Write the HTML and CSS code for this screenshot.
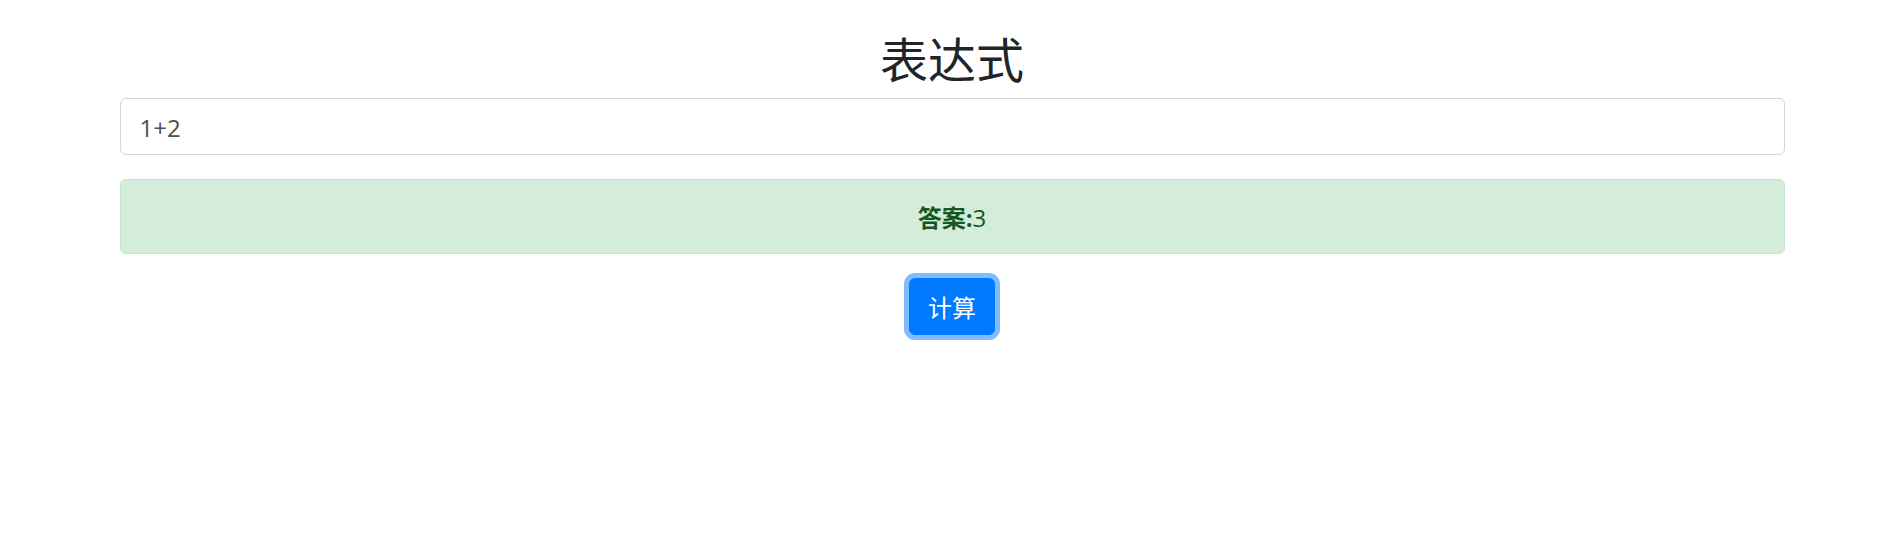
FILE: index.html
```html
<!DOCTYPE html>
<html lang="zh-CN">
<head>
<meta charset="utf-8">
<title>表达式</title>
<link rel="stylesheet" href="styles.css">
</head>
<body>
<main class="container">
  <form class="calculator">
    <h1 class="title"><label for="expression">表达式</label></h1>
    <input class="form-control" id="expression" type="text" value="1+2">
    <div class="alert" role="alert"><strong>答案:</strong>3</div>
    <button class="btn" type="button">计算</button>
  </form>
</main>
</body>
</html>
```

FILE: styles.css
```css
*,
*::before,
*::after {
  box-sizing: border-box;
}

body {
  margin: 0;
  background: #fff;
  color: #212529;
  font-family: "Open Sans", "Noto Sans", "Noto Sans CJK SC", sans-serif;
  font-size: 24px;
  line-height: 36px;
}

.container {
  max-width: 1713px;
  margin: 0 auto;
  padding: 30px 24px;
}

.calculator {
  display: flex;
  flex-direction: column;
  align-items: center;
  gap: 24px;
  text-align: center;
}

.title {
  margin: 0 0 -16px;
  font-size: 48px;
  font-weight: 400;
  line-height: 60px;
}

.form-control {
  width: 100%;
  height: 57px;
  padding: 11px 19px 9px;
  border: 1px solid #ced4da;
  border-radius: 6px;
  background: #fff;
  color: #495057;
  font: inherit;
}

.alert {
  width: 100%;
  padding: 20px 30px 17px;
  border: 1px solid #c3e6cb;
  border-radius: 6px;
  background: #d4edda;
  color: #155724;
}

.alert strong {
  font-weight: 700;
}

.btn {
  height: 57px;
  padding: 11px 18px 9px;
  border: 1px solid #007bff;
  border-radius: 6px;
  background: #007bff;
  box-shadow: 0 0 0 5px #80bdff;
  color: #fff;
  font: inherit;
}
```
